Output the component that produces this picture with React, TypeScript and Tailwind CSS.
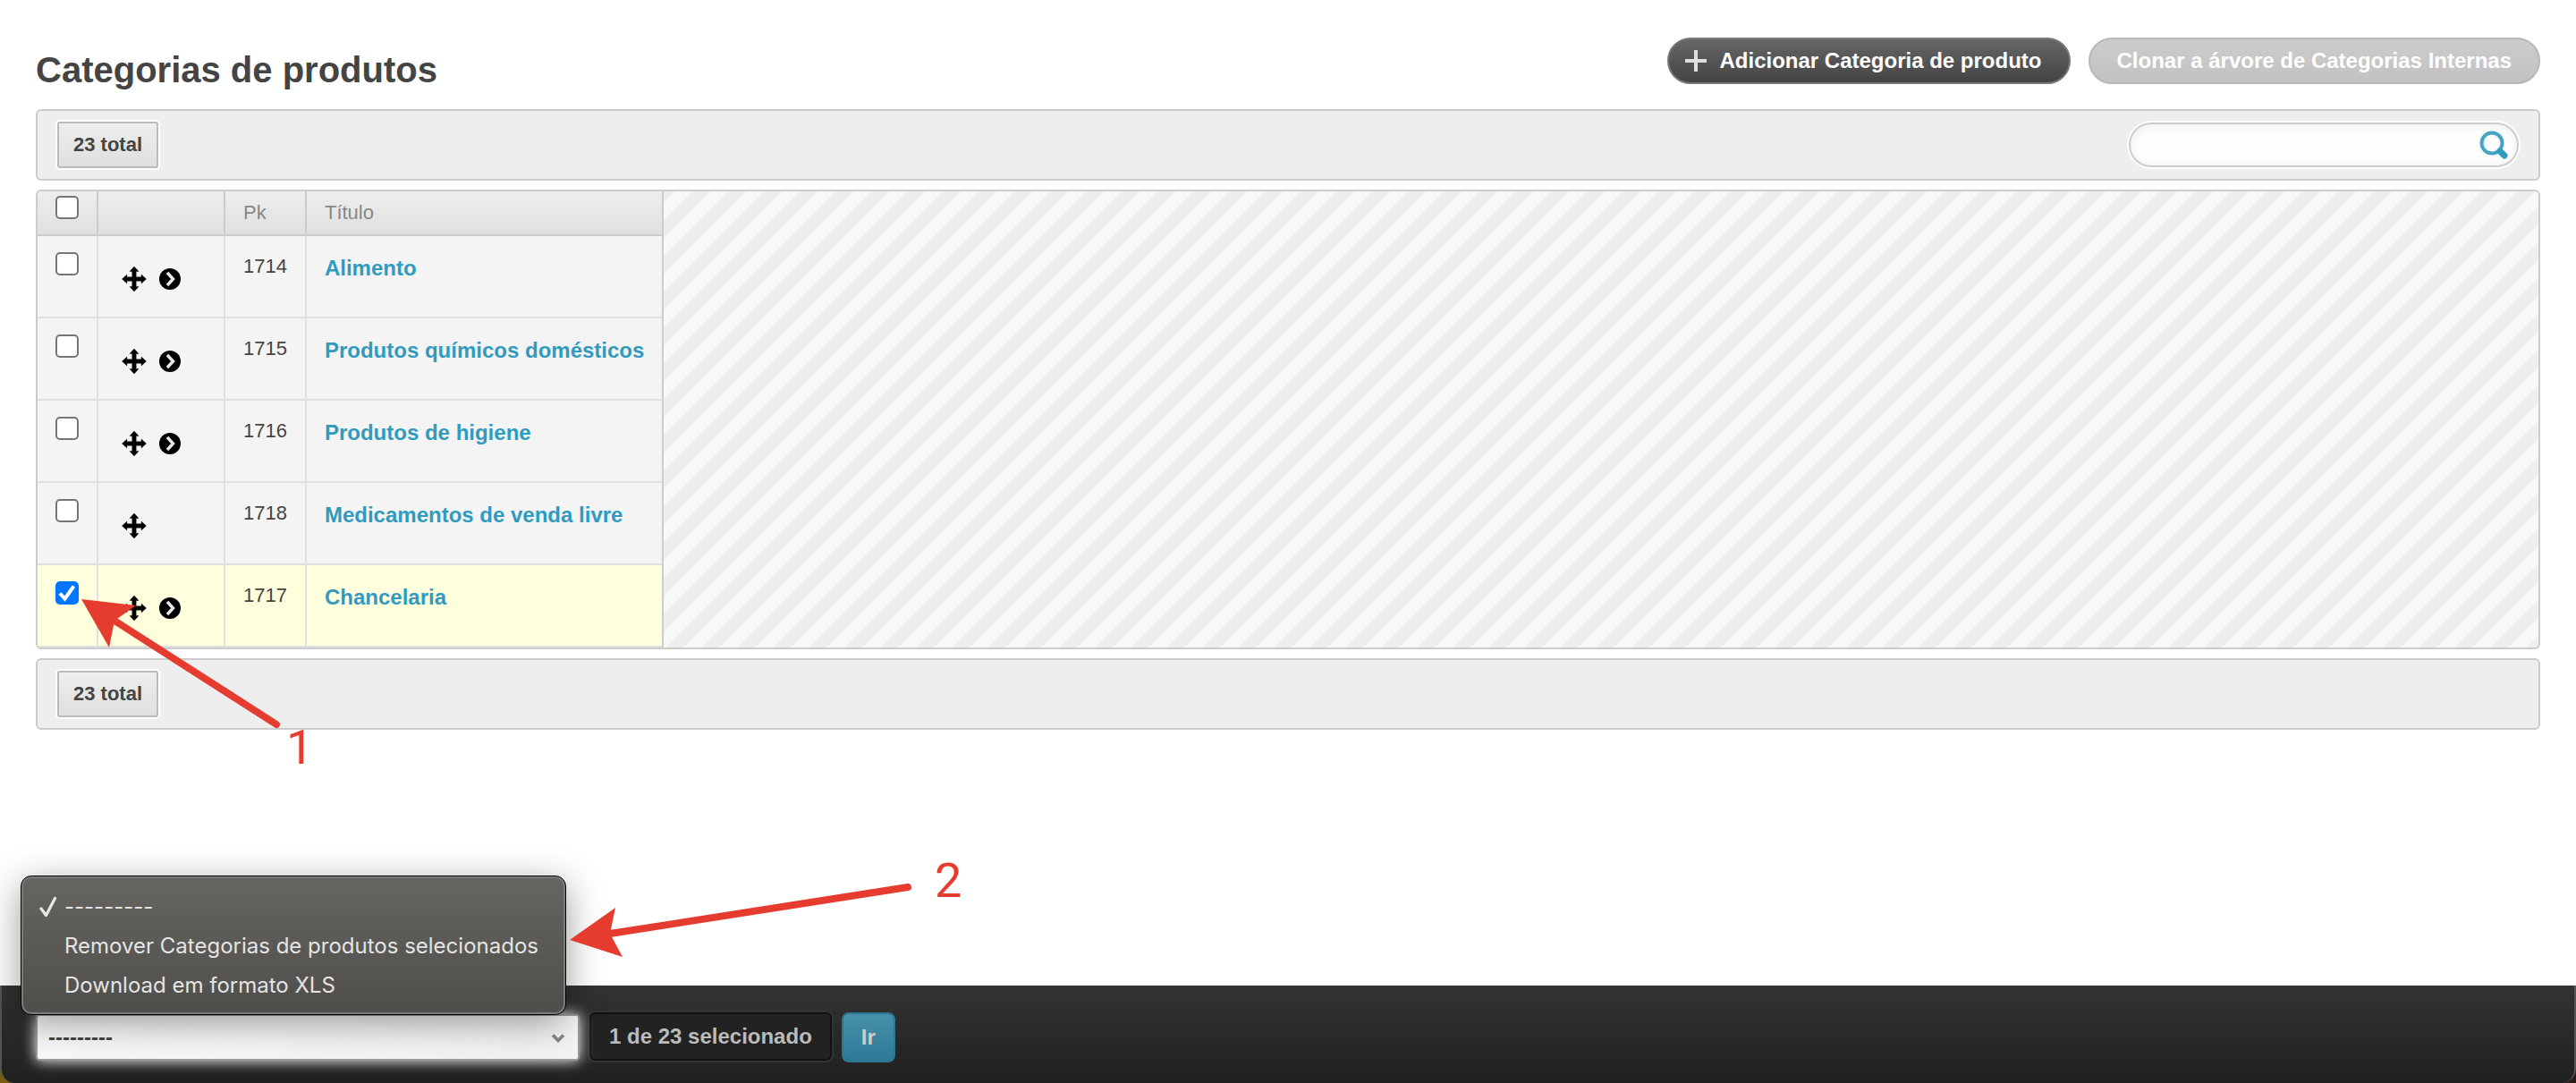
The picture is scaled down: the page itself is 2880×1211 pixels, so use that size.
import React, { useState } from 'react';

// ── Data ──────────────────────────────────────────────────────────────────────
interface Category {
    pk: number;
    title: string;
    hasChildren: boolean;
}

const CATEGORIES: Category[] = [
    { pk: 1714, title: 'Alimento', hasChildren: true },
    { pk: 1715, title: 'Produtos químicos domésticos', hasChildren: true },
    { pk: 1716, title: 'Produtos de higiene', hasChildren: true },
    { pk: 1718, title: 'Medicamentos de venda livre', hasChildren: false },
    { pk: 1717, title: 'Chancelaria', hasChildren: true },
];

const TOTAL = 23;

const EMPTY_ACTION = '---------';
const ACTIONS = [EMPTY_ACTION, 'Remover Categorias de produtos selecionados', 'Download em formato XLS'];

// ── Icons ─────────────────────────────────────────────────────────────────────
const MoveIcon: React.FC = () => (
    <svg viewBox="0 0 28 28" className="h-7 w-7" aria-hidden="true">
        <path
            d="M14 0l5 5.5h-2.8v6.3h5.9V9L27.500 14l-5.400 5v-2.800h-5.900v6.300H19L14 28l-5-5.500h2.800v-6.300H5.900V19L.5 14l5.400-5v2.800h5.900V5.500H9z"
            fill="#000"
            stroke="#000"
            strokeWidth="0.400"
            strokeLinejoin="round"
        />
    </svg>
);

const ExpandIcon: React.FC = () => (
    <svg viewBox="0 0 24 24" className="h-6 w-6" aria-hidden="true">
        <circle cx="12" cy="12" r="12" fill="#000" />
        <path d="M9 5l6.500 7L9 19" fill="none" stroke="#e8e8e8" strokeWidth="3.400" />
    </svg>
);

const PlusIcon: React.FC = () => (
    <svg viewBox="0 0 24 24" className="h-6 w-6" aria-hidden="true">
        <path d="M12 0v24M0 12h24" stroke="#e0e0e0" strokeWidth="4" />
    </svg>
);

const SearchIcon: React.FC = () => (
    <svg viewBox="0 0 32 32" className="h-8 w-8" aria-hidden="true">
        <circle cx="14" cy="14" r="11.500" fill="none" stroke="#46a5c4" strokeWidth="4" />
        <path d="M23 23l5 5" stroke="#309bbf" strokeWidth="7" strokeLinecap="round" />
    </svg>
);

const Checkbox: React.FC<{ label: string; checked: boolean; onChange: () => void }> = ({ label, checked, onChange }) => (
    <span className="relative block h-[26px] w-[26px]">
        <input
            type="checkbox"
            aria-label={label}
            checked={checked}
            onChange={onChange}
            className="block h-[26px] w-[26px] appearance-none rounded-[5px] border-2 border-[#767676] bg-white checked:border-[#0075ff] checked:bg-[#0075ff]"
        />
        {checked && (
            <svg viewBox="0 0 26 26" className="pointer-events-none absolute inset-0" aria-hidden="true">
                <path d="M5 13.500l5.500 6L20.500 5.500" fill="none" stroke="#fff" strokeWidth="4" />
            </svg>
        )}
    </span>
);

// ── Toolbar ───────────────────────────────────────────────────────────────────
const Toolbar: React.FC<{ children?: React.ReactNode }> = ({ children }) => (
    <div className="flex h-20 items-center justify-between rounded-[6px] border-2 border-[#ccc] bg-[#eee] px-[22px]">
        <span className="rounded-[3px] border-2 border-[#bbb] bg-linear-to-b from-[#eee] to-[#dfdfdf] px-4 py-2 text-[22px] leading-8 font-bold shadow-[0_0_0_2px_#fff]">
            {TOTAL} total
        </span>
        {children}
    </div>
);

export default function App() {
    const [selected, setSelected] = useState<number[]>([1717]);
    const [action, setAction] = useState(EMPTY_ACTION);

    const toggle = (pk: number) =>
        setSelected((prev) => (prev.includes(pk) ? prev.filter((p) => p !== pk) : [...prev, pk]));

    const allSelected = selected.length === CATEGORIES.length;
    const toggleAll = () => setSelected(allSelected ? [] : CATEGORIES.map((c) => c.pk));

    return (
        <div className="relative flex min-h-screen flex-col overflow-hidden bg-white font-['Liberation_Sans',Arial,sans-serif] text-[#444]">
            <main className="flex grow flex-col gap-[10px] px-10">
                <header className="flex h-28 items-start justify-between">
                    <h1 className="pt-[55px] text-[40px] leading-[46px] font-bold">Categorias de produtos</h1>
                    <div className="flex gap-5 pt-[42px] text-2xl font-bold text-white">
                        <a
                            href="#add"
                            className="flex items-center gap-[14px] rounded-full border-2 border-[#777] bg-linear-to-b from-[#666] to-[#444] pr-[30px] pl-[18px] leading-[48px]"
                        >
                            <PlusIcon />
                            Adicionar Categoria de produto
                        </a>
                        <a
                            href="#clone"
                            className="rounded-full border-2 border-[#b8b8b8] bg-linear-to-b from-[#ccc] to-[#c2c2c2] px-[30px] leading-[48px]"
                        >
                            Clonar a árvore de Categorias Internas
                        </a>
                    </div>
                </header>

                <Toolbar>
                    <form className="flex h-[50px] w-[436px] items-center rounded-full border-2 border-[#ccc] bg-[#fdfdfd] pr-[10px] pl-6 shadow-[0_0_0_2px_#fff,inset_0_2px_10px_#eee]">
                        <input type="text" aria-label="Pesquisar" className="min-w-0 grow bg-transparent text-2xl outline-none" />
                        <button type="submit" aria-label="Pesquisar">
                            <SearchIcon />
                        </button>
                    </form>
                </Toolbar>

                <div className="overflow-hidden rounded-[6px] border-2 border-[#ccc] bg-[#f8f8f8] bg-[linear-gradient(135deg,#eee_25%,#f8f8f8_25%,#f8f8f8_50%,#eee_50%,#eee_75%,#f8f8f8_75%)] bg-size-[40px_40px] bg-position-[13px_0px]">
                    <table className="border-separate border-spacing-0 border-r-2 border-[#ccc] text-left text-[22px] leading-7">
                        <thead>
                            <tr className="h-[50px] bg-linear-to-b from-[#eee] to-[#dfdfdf] text-[#888]">
                                <th className="border-r-2 border-b-2 border-[#ccc] px-5 pt-[5px] align-top font-normal">
                                    <Checkbox label="Selecionar tudo" checked={allSelected} onChange={toggleAll} />
                                </th>
                                <th className="w-[142px] border-r-2 border-b-2 border-[#ccc]" aria-label="Árvore" />
                                <th className="border-r-2 border-b-2 border-[#ccc] px-5 font-normal">Pk</th>
                                <th className="border-b-2 border-[#ccc] px-5 font-normal">Título</th>
                            </tr>
                        </thead>
                        <tbody>
                            {CATEGORIES.map((c) => (
                                <tr key={c.pk} className={selected.includes(c.pk) ? 'h-[92px] bg-[#ffffdd]' : 'h-[92px] bg-[#f4f4f4]'}>
                                    <td className="border-r-2 border-b-2 border-[#e0e0e0] px-5 pt-[18px] align-top">
                                        <Checkbox label={c.title} checked={selected.includes(c.pk)} onChange={() => toggle(c.pk)} />
                                    </td>
                                    <td className="border-r-2 border-b-2 border-[#e0e0e0] pt-[34px] pl-[26px] align-top">
                                        <div className="flex items-center gap-[14px]">
                                            <button type="button" aria-label="Mover">
                                                <MoveIcon />
                                            </button>
                                            {c.hasChildren && (
                                                <button type="button" aria-label="Expandir">
                                                    <ExpandIcon />
                                                </button>
                                            )}
                                        </div>
                                    </td>
                                    <td className="border-r-2 border-b-2 border-[#e0e0e0] px-5 pt-5 align-top">{c.pk}</td>
                                    <td className="border-b-2 border-[#e0e0e0] px-5 pt-[22px] align-top text-2xl leading-7 font-bold">
                                        <a href={`#${c.pk}`} className="text-[#309bbf]">
                                            {c.title}
                                        </a>
                                    </td>
                                </tr>
                            ))}
                        </tbody>
                    </table>
                </div>

                <Toolbar />
            </main>

            {/* Action bar, rounded at the bottom like the window around it */}
            <div className="bg-linear-to-r from-[#7a5c10] to-[#2a1a14]">
                <footer className="flex h-[109px] items-start gap-[11px] rounded-b-[16px] border-x-2 border-[#555] bg-linear-to-b from-[#333] to-[#202020] pt-[30px] pl-[38px] font-bold">
                    <div className="relative">
                        <select
                            aria-label="Ação"
                            value={action}
                            onChange={(e) => setAction(e.target.value)}
                            className="mt-[2px] h-[52px] w-[608px] appearance-none rounded-[4px] border-2 border-[#999] bg-linear-to-br from-white to-[#f2f2f2] px-3 text-2xl text-[#444] shadow-[0_0_16px_#fff]"
                        >
                            {ACTIONS.map((a) => (
                                <option key={a}>{a}</option>
                            ))}
                        </select>
                        <svg viewBox="0 0 16 10" className="pointer-events-none absolute top-6 right-4 h-[10px] w-4" aria-hidden="true">
                            <path d="M2 1.500l6 6 6-6" fill="none" stroke="#888" strokeWidth="3.600" />
                        </svg>

                        {/* Open list of the drop-down */}
                        <ul className="absolute bottom-[51px] -left-[17px] w-[610px] rounded-[12px] border border-black bg-linear-to-b from-[#666561] to-[#4f4e4b] pt-[12px] pb-[10px] pl-5 font-[Inter,sans-serif] text-2xl leading-[44px] font-normal text-[#e4e4e4] shadow-[inset_0_0_0_2px_#7a7a77,0_10px_40px_rgba(0,0,0,0.4)]">
                            {ACTIONS.map((a) => (
                                <li key={a} className="flex items-center">
                                    <span className="w-7 shrink-0">
                                        {a === action && (
                                            <svg viewBox="0 0 20 24" className="h-6 w-5" aria-hidden="true">
                                                <path d="M2 14l5.500 7.500L17.500 2.500" fill="none" stroke="#e8e8e8" strokeWidth="3.200" strokeLinecap="round" strokeLinejoin="round" />
                                            </svg>
                                        )}
                                    </span>
                                    {a}
                                </li>
                            ))}
                        </ul>
                    </div>
                    <span className="rounded-[6px] border-2 border-[#111] bg-[#222] px-5 text-2xl leading-[50px] text-[#bbb] shadow-[0_0_0_2px_#333]">
                        {selected.length} de {TOTAL} selecionado
                    </span>
                    <button
                        type="button"
                        className="rounded-[8px] border-2 border-[#2b7691] bg-linear-to-b from-[#4790ab] to-[#2d7a96] px-5 text-2xl leading-[52px] text-[#ccc]"
                    >
                        Ir
                    </button>
                </footer>
            </div>

            {/* Step markers drawn over the page */}
            <svg className="pointer-events-none absolute inset-0 h-full w-full font-[Roboto,sans-serif]" fill="#e63c2f" aria-hidden="true">
                <path d="M128 694L309 810" stroke="#e63c2f" strokeWidth="8" strokeLinecap="round" />
                <path d="M91 670L152 677L128 694L122 724z" />
                <path d="M682 1044L1015 992" stroke="#e63c2f" strokeWidth="8" strokeLinecap="round" />
                <path d="M637 1051L688 1015L682 1044L696 1070z" />
                <text x="320" y="854" fontSize="54">1</text>
                <text x="1045" y="1003" fontSize="54">2</text>
            </svg>
        </div>
    );
}
